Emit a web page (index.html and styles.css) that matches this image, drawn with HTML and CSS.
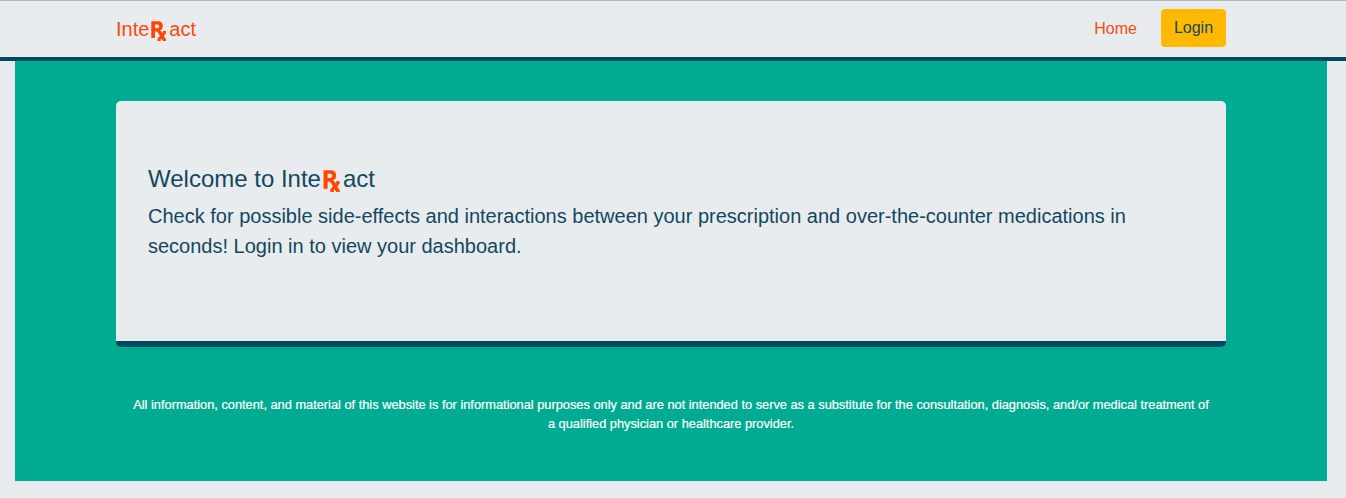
FILE: index.html
```html
<!DOCTYPE html>
<html lang="en">
<head>
<meta charset="utf-8">
<title>InteRxact</title>
<link rel="stylesheet" href="styles.css">
</head>
<body>
<svg width="0" height="0" class="defs">
  <symbol id="rx" viewBox="0 0 20 20">
    <path fill-rule="evenodd" d="M2.3 .2H8.5C12.3 .2 13.8 2.2 13.8 5C13.8 7.4 12.6 8.8 10.8 9.6L12.2 12H9L8 10.5H6V17H2.3ZM6 3.4V7.2H8C9.4 7.2 10.2 6.6 10.2 5.2C10.2 4 9.4 3.4 8 3.4Z"/>
    <path d="M8.3 10H12L13.3 12.1L13.9 11.5V10H17V12.3L14.9 14.6L16.2 17.4H17V20H13.9L12.6 17.7L11.7 18.5V20H8.5V17.5L10.9 15L9.3 12Z"/>
  </symbol>
</svg>
<header class="navbar">
  <div class="container nav-row">
    <a class="brand">Inte<svg class="rx"><use href="#rx"/></svg>act</a>
    <nav class="links"><a class="home">Home</a><a class="login">Login</a></nav>
  </div>
</header>
<main class="main">
  <div class="container">
    <section class="card">
      <h1 class="title">Welcome to Inte<svg class="rx rx-title"><use href="#rx"/></svg>act</h1>
      <p class="lead">Check for possible side-effects and interactions between your prescription and over-the-counter medications in seconds! Login in to view your dashboard.</p>
    </section>
    <p class="disclaimer">All information, content, and material of this website is for informational purposes only and are not intended to serve as a substitute for the consultation, diagnosis, and/or medical treatment of a qualified physician or healthcare provider.</p>
  </div>
</main>
</body>
</html>
```
FILE: styles.css
```css
* { box-sizing: border-box; }
body { margin: 0; height: 498px; overflow: hidden; background: #e9ecef; font: 16px/24px "Liberation Sans", Arial, sans-serif; color: #12485e; }
.defs { display: none; }
.navbar { height: 61px; border-top: 1px solid #b5b8bb; border-bottom: 4px solid #004a60; }
.container { width: 1110px; margin-left: 116px; }
.nav-row { display: flex; justify-content: space-between; padding-top: 8px; }
.brand { font-size: 20px; line-height: 30px; padding-top: 5px; color: #f9490e; white-space: nowrap; }
.rx { width: 20px; height: 20px; vertical-align: -5px; fill: #ff4500; }
.links { display: flex; gap: 24px; }
.home { padding-top: 8px; color: #f9490e; }
.login { width: 65px; height: 38px; padding-top: 7px; text-align: center; background: #ffb900; border-radius: 4px; }
.main { height: 420px; margin: 0 19px 0 15px; padding-top: 40px; background: #00ab91; }
.main .container { margin-left: 101px; }
.card { height: 246px; padding: 64px 32px; background: #e9ecef; border-bottom: 6px solid #004a60; border-radius: 5px; }
.title { height: 29px; margin: 0 0 7px; font-size: 24px; line-height: 28.8px; font-weight: 400; }
.rx-title { width: 22px; height: 22px; }
.lead { margin: 0; font-size: 20px; line-height: 30px; }
.disclaimer { margin: 48px 0 0; padding: 0 15px; font-size: 12.8px; line-height: 19.2px; color: #fff; text-align: center; -webkit-text-stroke: 0.2px #fff; }
```
